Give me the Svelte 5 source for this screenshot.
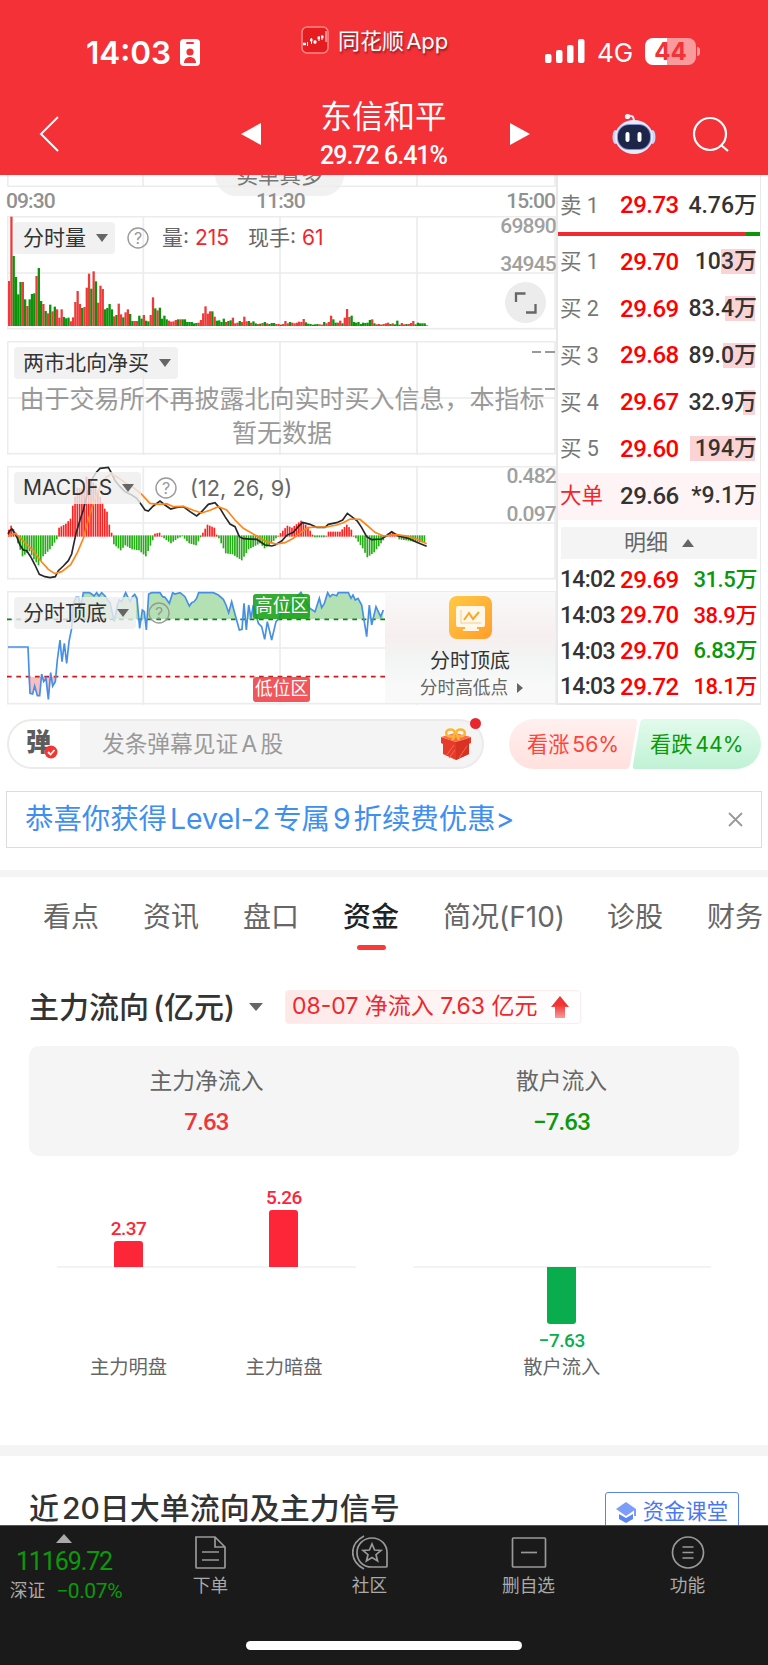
<script lang="ts">
    const sumBars = [
        { label: "主力明盘", value: 2.37, height: 26 },
        { label: "主力暗盘", value: 5.26, height: 57 },
    ];

    const bids = [
        { label: "买 1", price: "29.70", volume: "103万", depth: 34 },
        { label: "买 2", price: "29.69", volume: "83.4万", depth: 30 },
        { label: "买 3", price: "29.68", volume: "89.0万", depth: 32 },
        { label: "买 4", price: "29.67", volume: "32.9万", depth: 12 },
        { label: "买 5", price: "29.60", volume: "194万", depth: 65 },
    ];

    const trades = [
        { time: "14:02", price: "29.69", volume: "31.5万", up: false },
        { time: "14:03", price: "29.70", volume: "38.9万", up: true },
        { time: "14:03", price: "29.70", volume: "6.83万", up: false },
        { time: "14:03", price: "29.72", volume: "18.1万", up: true },
    ];

    const tabs = ["看点", "资讯", "盘口", "资金", "简况(F10)", "诊股", "财务"];
    const active = "资金";

    // one entry per minute, r = up, g = down
    const volume =
        "r135 r328 g210 g147 g95 g132 r132 g80 r60 g80 g96 g98 r150 g174 g75 r66 g45 r38 g64 r44 g58 r50 r25 r50 g27 g23 g25 r14 r26 r72 r105 r66 g54 r57 r115 r157 g112 r164 g134 r70 r121 r111 g50 g54 g66 g50 r29 g33 r67 r35 g26 r41 r50 g36 g15 r15 r15 g31 g22 r33 g16 g14 r33 r86 g53 r47 g55 g22 g31 g20 r16 r13 r14 r18 g20 r20 g20 g20 g12 g12 g12 g8 g9 r10 r18 r38 r59 r37 r44 g44 r28 g16 g17 g12 g22 r12 g15 g17 r25 r8 r10 g15 r12 r28 r14 g15 r10 g14 g8 r6 g7 r9 g12 r8 g6 g9 g9 r6 r6 g4 r6 r15 r8 g12 r10 r8 r10 r13 r12 r21 g11 g7 g6 g4 g5 g6 r5 r4 g12 r8 r12 r31 g20 g10 r10 r16 g8 r25 r51 r27 g31 g12 g10 g12 g6 g10 g9 g10 g18 r20 g8 r5 r6 g4 r6 r8 r10 g6 r8 g5 g16 g4 r9 r5 g6 r6 r9 r15 g5 g10 g8 g8 g8 r2"
            .split(" ")
            .map((d, i) => ({ x: 24 + i * 6.85, up: d[0] == "r", h: +d.slice(1) }));

    const macdKeys = [
        [0, 7], [1, 11], [3, 4], [4, -8], [6, -21], [9, -16], [11, -24], [13, -30], [15, -21], [18, -14], [21, -4],
        [22, 9], [25, 13], [27, 18], [28, 31], [30, 49], [32, 48], [34, 60], [36, 56], [38, 52], [40, 40], [42, 28],
        [43, 25], [44, 12], [45, 4], [46, -9], [49, -15], [51, -10], [54, -14], [57, -15], [60, -21], [63, -5],
        [64, 3], [66, 4], [67, 1], [68, -3], [71, -8], [74, -3], [76, -1], [79, -8], [82, -10], [84, -2], [85, 4],
        [87, 12], [90, 9], [91, 2], [92, -3], [95, -18], [98, -19], [102, -25], [105, -14], [110, -8], [112, -13],
        [115, -8], [117, -3], [118, 1], [122, 11], [124, 9], [128, 16], [131, 10], [133, 2], [134, -2], [138, -2],
        [139, 1], [140, 5], [145, 5], [148, 12], [150, 7], [151, 1], [152, -3], [155, -13], [157, -22], [160, -17],
        [163, -8], [165, -2], [166, 3], [168, 5], [170, 2], [171, -4], [174, -5], [179, -7], [183, -7],
    ];

    const macd: { x: number; v: number }[] = [];
    for (let k = 0; k < macdKeys.length - 1; k++) {
        const [a, va] = macdKeys[k];
        const [b, vb] = macdKeys[k + 1];
        for (let i = a; i < b; i++) {
            macd.push({ x: 24 + i * 6.85, v: (va + ((vb - va) * (i - a)) / (b - a)) * 3 });
        }
    }

    const dif =
        "24,612 30,602 36,597 48,615 60,645 70,660 80,662 92,680 105,705 118,733 135,740 150,743 166,740 175,722 190,708 205,692 215,672 228,610 240,570 250,540 262,490 275,450 288,428 300,415 325,412 335,430 345,452 360,470 375,485 395,495 410,505 420,518 435,540 445,543 460,528 480,513 495,525 512,537 530,532 550,530 570,545 590,558 605,545 625,523 645,518 660,535 675,560 690,582 705,590 718,620 730,626 770,628 795,645 815,648 825,645 845,633 860,616 880,607 895,590 908,577 930,583 950,592 975,592 985,583 1010,578 1028,570 1042,550 1055,560 1072,573 1085,593 1100,620 1115,629 1145,627 1155,620 1175,605 1195,618 1225,625 1250,637 1280,649";
    const dea =
        "24,618 45,610 60,622 80,643 100,662 120,690 145,718 165,731 185,725 212,704 232,668 250,625 262,580 275,535 290,493 305,462 320,440 335,433 350,440 375,458 400,472 425,493 450,520 480,523 500,521 520,530 550,529 580,541 605,549 630,541 655,530 680,540 705,570 730,595 770,618 800,635 830,642 855,638 880,625 905,605 925,593 950,591 980,591 1010,585 1030,578 1050,567 1080,568 1100,585 1125,607 1150,618 1190,614 1220,618 1250,627 1280,641";
    const signal =
        "24,201 84,201 90,340 98,342 104,318 112,347 119,347 125,282 131,305 138,295 145,358 152,278 158,318 166,305 172,240 180,180 186,245 193,190 200,250 207,185 215,145 220,70 228,52 236,52 243,80 250,38 268,38 275,42 282,48 290,38 297,48 305,38 315,48 323,60 330,68 343,125 352,75 358,60 365,65 377,38 390,65 397,50 404,43 411,55 419,145 427,90 433,95 439,150 446,42 455,38 480,38 488,50 495,52 508,70 518,38 525,42 540,38 555,50 568,78 575,68 582,65 590,55 596,38 640,38 655,45 670,58 678,75 686,98 695,65 703,95 718,150 726,148 732,70 739,150 746,75 753,115 760,75 775,130 785,140 794,178 802,125 815,180 828,125 838,115 850,80 865,95 885,55 903,37 910,50 930,85 945,95 958,55 965,83 973,70 983,38 990,50 998,43 1010,47 1015,38 1045,38 1053,55 1059,45 1066,60 1074,55 1085,75 1100,170 1108,75 1115,135 1128,80 1142,110 1150,90";
</script>

{#snippet grid(top: number)}
    <g stroke="#ececec" stroke-width="5" fill="none">
        <path d="M430 {top}v342M840 {top}v342M1251 {top}v342M21 {top + 171}h1647" />
        <rect x="23" y={top + 2} width="1642" height="336" />
    </g>
{/snippet}

{#snippet help()}
    <svg class="help" viewBox="0 0 22 22" width="22" height="22">
        <circle cx="11" cy="11" r="10" fill="none" stroke="#999" stroke-width="1.4" />
        <text x="11" y="16.5" text-anchor="middle">?</text>
    </svg>
{/snippet}

<div class="app">
    <header>
        <div class="status">
            <span class="clock">14:03</span>
            <svg class="idcard" width="20" height="27" viewBox="0 0 20 27">
                <rect width="20" height="27" rx="4" fill="#fff" />
                <rect x="6" y="3" width="8" height="2" rx="1" fill="#f33137" />
                <circle cx="10" cy="13" r="3.6" fill="#f33137" />
                <path d="M4 24c0-8 12-8 12 0z" fill="#f33137" />
            </svg>
            <svg class="logo" width="28" height="28" viewBox="0 0 28 28">
                <rect x="1" y="1" width="26" height="26" rx="5" fill="#e61d20" stroke="#f88" stroke-width="1.5" />
                <path d="M6.500 16v4M10.500 12v6M14 14v4M18 10v5M21 9v5M25 5v11" stroke="#fff" />
                <path d="M2 18h3M9 14h2.500M12.500 16h3M16.500 12h2.500M20 11h2.500" stroke="#fff" stroke-width="2.500" />
            </svg>
            <span class="brand">同花顺 App</span>
            <svg class="cell" width="40" height="24" viewBox="0 0 40 24" fill="#fff">
                <rect y="15" width="6.5" height="9" rx="2" />
                <rect x="11" y="11" width="6.5" height="13" rx="2" />
                <rect x="22" y="6" width="6.5" height="18" rx="2" />
                <rect x="33" width="6.5" height="24" rx="2" />
            </svg>
            <span class="net">4G</span>
            <span class="battery">44</span>
            <i class="nub"></i>
        </div>
        <div class="nav">
            <svg class="back" width="21" height="36" viewBox="0 0 21 36">
                <path d="M19 1 2 18l17 17" fill="none" stroke="#fff" stroke-width="2" />
            </svg>
            <svg class="prev" width="20" height="22"><path d="M20 0v22L0 11z" fill="#fff" /></svg>
            <div class="title">
                <b>东信和平</b>
                <span>29.72 6.41%</span>
            </div>
            <svg class="next" width="20" height="22"><path d="M0 0v22l20-11z" fill="#fff" /></svg>
            <svg class="robot" width="44" height="42" viewBox="0 0 44 42">
                <path d="M15 3c5-1 7 0 7 6" fill="none" stroke="#dfe5fa" stroke-width="2" />
                <circle cx="15.5" cy="3.5" r="2.6" fill="#f5f6ff" />
                <ellipse cx="3.5" cy="24" rx="3" ry="7" fill="#cdd3f5" />
                <ellipse cx="40.5" cy="24" rx="3" ry="7" fill="#cdd3f5" />
                <ellipse cx="22" cy="24" rx="19" ry="17" fill="#e6eafb" />
                <rect x="5" y="11" width="34" height="26" rx="12" fill="#8592d8" />
                <rect x="6" y="12" width="32" height="24" rx="11" fill="#1d2548" />
                <rect x="13.500" y="19" width="4" height="10" rx="2" fill="#fff" />
                <rect x="25.500" y="19" width="4" height="10" rx="2" fill="#fff" />
            </svg>
            <svg class="search" width="38" height="38" viewBox="0 0 38 38" fill="none" stroke="#fff" stroke-width="2.200">
                <circle cx="18" cy="18" r="16" />
                <path d="m29 29 7 6" />
            </svg>
        </div>
    </header>

    <main class="quote">
        <div class="charts">
            <div class="peek">
                <svg width="549" height="12" stroke="#ececec" stroke-width="1.6">
                    <path d="M.8 0v12M136 0v12M273 0v12M410 0v12M548 0v12M0 11.200h549" />
                </svg>
                <span class="bubble">卖单真多</span>
            </div>
            <div class="hours"><span>09:30</span><span>11:30</span><span>15:00</span></div>

            <section class="panel">
                <svg viewBox="21 138 1647 342" width="549" height="114">
                    {@render grid(138)}
                    {#each volume as bar}
                        <rect x={bar.x} y={468 - bar.h} width="6.9" height={bar.h} fill={bar.up ? "#ef3a3a" : "#0b930b"} />
                    {/each}
                </svg>
                <div class="tools">
                    <span class="chip">分时量<i class="down"></i></span>
                    {@render help()}
                    <span class="stat">量: <em>215</em></span>
                    <span class="stat">现手: <em>61</em></span>
                </div>
                <div class="scale"><span>69890</span><span>34945</span></div>
                <svg class="expand" width="41" height="41" viewBox="0 0 41 41">
                    <circle cx="20.500" cy="20.500" r="20.500" fill="#ececec" />
                    <path d="M11 20v-8.500h9.500M30.500 22v8.500h-9.500" fill="none" stroke="#666" stroke-width="2.300" />
                </svg>
            </section>

            <section class="panel">
                <svg viewBox="21 33 1647 342" width="549" height="114">{@render grid(33)}</svg>
                <div class="tools"><span class="chip">两市北向净买<i class="down"></i></span></div>
                <p class="notice">由于交易所不再披露北向实时买入信息，本指标<br />暂无数据</p>
                <svg class="dashes" width="24" height="44" stroke="#999" stroke-width="2">
                    <path d="M0 3h9M13 3h10M13 40h10" />
                </svg>
            </section>

            <section class="panel">
                <svg viewBox="21 408 1647 342" width="549" height="114">
                    {@render grid(408)}
                    {#each macd as bar}
                        <rect
                            x={bar.x}
                            y={bar.v > 0 ? 620 - bar.v : 616}
                            width="5"
                            height={Math.abs(bar.v)}
                            fill={bar.v > 0 ? "#ff2020" : "#25ad16"}
                        />
                    {/each}
                    <polyline points={dif} fill="none" stroke="#282828" stroke-width="5" />
                    <polyline points={dea} fill="none" stroke="#ff8519" stroke-width="5" />
                </svg>
                <div class="tools macd">
                    <span class="chip">MACDFS<i class="down"></i></span>
                    {@render help()}
                    <span class="stat">(12, 26, 9)</span>
                </div>
                <div class="scale"><span>0.482</span><span>0.097</span></div>
            </section>

            <section class="panel">
                <svg viewBox="21 33 1647 342" width="549" height="114">
                    {@render grid(33)}
                    <clipPath id="high"><rect x="21" y="33" width="1200" height="85" /></clipPath>
                    <clipPath id="low"><rect x="21" y="290" width="1200" height="85" /></clipPath>
                    <polygon points="24,118 {signal} 1150,118" fill="#1aa51a" opacity=".33" clip-path="url(#high)" />
                    <polygon points="84,290 {signal.slice(14)} 1150,290" fill="#f03a3a" opacity=".33" clip-path="url(#low)" />
                    <path d="M21 118h1134" stroke="#12801c" stroke-width="5" stroke-dasharray="14 14" />
                    <path d="M21 290h1134" stroke="#cc1919" stroke-width="5" stroke-dasharray="14 14" />
                    <polyline points={signal} fill="none" stroke="#468fe6" stroke-width="5" />
                </svg>
                <div class="tools">
                    <span class="chip">分时顶底<i class="down"></i></span>
                    {@render help()}
                </div>
                <span class="zone high">高位区</span>
                <span class="zone low">低位区</span>
                <div class="promo">
                    <svg width="43" height="43" viewBox="0 0 43 43">
                        <defs>
                            <linearGradient id="gold" x2="1" y2="1">
                                <stop stop-color="#ffca45" />
                                <stop offset="1" stop-color="#ff9d2c" />
                            </linearGradient>
                        </defs>
                        <rect width="43" height="43" rx="8" fill="url(#gold)" />
                        <path d="M9 10h25q2 0 2 2v17q0 2-2 2h-6v2h2v2H14v-2h2v-2H9q-2 0-2-2V12q0-2 2-2z" fill="#fff8e8" />
                        <path d="M12 14v13h20" fill="none" stroke="#f5dcae" stroke-width="1.500" />
                        <path d="m15 24 5-7 4 6 6-7" fill="none" stroke="#fca52b" stroke-width="2" />
                    </svg>
                    <b>分时顶底</b>
                    <span>分时高低点<i class="go"></i></span>
                </div>
            </section>
        </div>

        <aside class="book">
            <div class="order ask"><span>卖 1</span><b>29.73</b><em>4.76万</em></div>
            <div class="ratio"></div>
            {#each bids as bid}
                <div class="order">
                    <span>{bid.label}</span><b>{bid.price}</b>
                    <em><i class="depth" style="width: {bid.depth}px"></i>{bid.volume}</em>
                </div>
            {/each}
            <div class="order big"><span>大单</span><b>29.66</b><em>*9.1万</em></div>
            <div class="more">明细<i class="up"></i></div>
            {#each trades as t}
                <div class="order trade">
                    <span>{t.time}</span><b>{t.price}</b><em class={t.up ? "rise" : "fall"}>{t.volume}</em>
                </div>
            {/each}
        </aside>
    </main>

    <div class="chat">
        <div class="input">
            <div class="dan">
                弹
                <svg width="14" height="14" viewBox="0 0 14 14">
                    <circle cx="7" cy="7" r="6.500" fill="#f5352f" />
                    <path d="m4 7 2.500 2.500L10.500 5" fill="none" stroke="#fff" stroke-width="1.800" />
                </svg>
            </div>
            <span class="hint">发条弹幕见证 A 股</span>
            <svg class="gift" width="30" height="32" viewBox="0 0 30 32">
                <path d="M0 9 15 14 30 9v6l-2 1v10l-13 6-13-6V16l-2-1z" fill="#e63b2a" />
                <path d="M0 9 14 5l16 4-15 5z" fill="#ff6b4a" />
                <path d="M15 14v18l13-6V11z" fill="#d83222" />
                <path d="m5 28 8-11M8 30l6-8M18 30l8-12" stroke="#f4694e" />
                <g fill="none" stroke="#f7b733" stroke-width="2.600">
                    <ellipse cx="9.500" cy="5" rx="4.300" ry="3.500" />
                    <ellipse cx="19.500" cy="5" rx="4.300" ry="3.500" />
                    <path d="m14 8-3 4M16 8l2 4" />
                </g>
            </svg>
            <i class="dot"></i>
        </div>
        <div class="votes">
            <svg viewBox="0 0 252 50" width="252" height="50">
                <defs>
                    <linearGradient id="bull" x2="0" y2="1">
                        <stop stop-color="#fff0ef" />
                        <stop offset="1" stop-color="#ffe1df" />
                    </linearGradient>
                    <linearGradient id="bear" x2="0" y2="1">
                        <stop stop-color="#e2faec" />
                        <stop offset="1" stop-color="#c0f2d5" />
                    </linearGradient>
                </defs>
                <path d="M25 0H125q4 0 3 4L121 46q-1 4-5 4H25a25 25 0 0 1 0-50z" fill="url(#bull)" />
                <path d="M227 0H136q-4 0-5 4L124 46q-1 4 3 4h100a25 25 0 0 0 0-50z" fill="url(#bear)" />
            </svg>
            <div><span class="bull">看涨 56%</span><span class="bear">看跌 44%</span></div>
        </div>
    </div>

    <div class="offer">
        <a href="#level2">恭喜你获得 Level-2 专属 9 折续费优惠&gt;</a>
        <svg width="15" height="15" stroke="#999" stroke-width="1.800"><path d="m1 1 13 13M14 1 1 14" /></svg>
    </div>

    <nav class="tabs">
        {#each tabs as tab}
            <span class:active={tab == active}>{tab}</span>
        {/each}
    </nav>

    <section class="flow">
        <div class="head">
            <h2>主力流向 (亿元)</h2>
            <i class="down"></i>
            <span class="tag">
                08-07 净流入 7.63 亿元
                <svg width="18" height="22" viewBox="0 0 18 22">
                    <defs>
                        <linearGradient id="arrow" x2="0" y2="1">
                            <stop offset=".4" stop-color="#f03434" />
                            <stop offset="1" stop-color="#f99a9a" />
                        </linearGradient>
                    </defs>
                    <path d="m9 0 9 11h-4v11H4V11H0z" fill="url(#arrow)" />
                </svg>
            </span>
        </div>
        <div class="card">
            <div><span>主力净流入</span><b class="in">7.63</b></div>
            <div><span>散户流入</span><b class="out">−7.63</b></div>
        </div>
        <div class="bars">
            <div class="axis">
                {#each sumBars as bar}
                    <div class="col">
                        <div class="pos">
                            <b>{bar.value}</b>
                            <i style="height: {bar.height}px"></i>
                        </div>
                        <div class="neg"></div>
                        <span>{bar.label}</span>
                    </div>
                {/each}
            </div>
            <div class="axis">
                <div class="col">
                    <div class="pos"></div>
                    <div class="neg">
                        <i style="height: 57px"></i>
                        <b>−7.63</b>
                    </div>
                    <span>散户流入</span>
                </div>
            </div>
        </div>
    </section>

    <section class="recent">
        <h2>近 20日大单流向及主力信号</h2>
        <span class="course">
            <svg width="20" height="27" viewBox="0 0 20 27" fill="#5b86f7">
                <path d="M10 4 0 11l10 7 8-5.500V18h2v-7z" opacity=".8" />
                <path d="M3 16v5l7 4 7-4v-5l-7 4z" />
            </svg>
            资金课堂
        </span>
    </section>

    <footer>
        <div class="menu">
            <div class="index">
                <i class="up"></i>
                <b>11169.72</b>
                <div><span>深证</span><em>−0.07%</em></div>
            </div>
            <div class="item">
                <svg width="36" height="36" viewBox="0 0 36 36">
                    <path d="M4 3h18l10 10v20q0 1-1 1H4q-1 0-1-1V3zM22 3v10h10M9 18h17M9 26h17" />
                </svg>
                下单
            </div>
            <div class="item">
                <svg width="36" height="36" viewBox="0 0 36 36">
                    <path d="M20 33C10 33 5 26 5 18.500S11 4 20 4s15 7 15 14.500V32q0 1-1 1zM12 2C-3 10-3 27 12 35" />
                    <path d="m20 10 2.600 6 6.400.5-5 4.200 1.600 6.300-5.600-3.400-5.600 3.400 1.600-6.300-5-4.200 6.400-.5z" />
                </svg>
                社区
            </div>
            <div class="item">
                <svg width="36" height="36" viewBox="0 0 36 36">
                    <rect x="1.500" y="4" width="33" height="29" rx="1" /><path d="M10 18.500h16" />
                </svg>
                删自选
            </div>
            <div class="item">
                <svg width="36" height="36" viewBox="0 0 36 36">
                    <circle cx="18" cy="18.500" r="15.500" /><path d="M12.500 13h11M12.500 18.500h11M12.500 24h11" />
                </svg>
                功能
            </div>
        </div>
        <div class="home"></div>
    </footer>
</div>

<style>
    :global(body) {
        background: #fff;
    }

    .app {
        display: flex;
        flex-direction: column;
        width: 768px;
        height: 1665px;
        overflow: hidden;
        font-family: Inter, "Noto Sans CJK SC", sans-serif;
        line-height: 1.3;
        color: #333;
    }

    .app * {
        box-sizing: border-box;
    }

    svg {
        flex: none;
        display: block;
    }

    em,
    i {
        font-style: normal;
    }

    b {
        font-weight: 500;
    }

    h2 {
        margin: 0;
        font-size: 30px;
        font-weight: 500;
        line-height: 40px;
        white-space: nowrap;
    }

    header {
        flex: none;
        height: 175px;
        background: #f33137;
        color: #fff;
        z-index: 1;
    }

    .status {
        display: flex;
        height: 92px;
        white-space: nowrap;
    }

    .clock {
        width: 94px;
        margin: 33px 0 0 86px;
        font-size: 31.500px;
        font-weight: 600;
        line-height: 40px;
    }

    .idcard {
        margin-top: 39px;
    }

    .logo {
        margin: 26px 0 0 101px;
    }

    .brand {
        width: 112px;
        margin: 26px 0 0 9px;
        font-size: 22px;
        line-height: 30px;
        word-spacing: -4px;
        text-shadow: 1px 2px 2px #0006;
    }

    .cell {
        margin: 39px 0 0 95px;
    }

    .net {
        width: 48px;
        margin: 38px 0 0 12px;
        font-size: 26px;
        line-height: 30px;
    }

    .battery {
        width: 51px;
        height: 27px;
        margin-top: 38px;
        border-radius: 8px;
        background: linear-gradient(90deg, #fff 44%, #f99a9d 44%);
        color: #f33137;
        font-size: 24px;
        font-weight: 700;
        line-height: 27px;
        text-align: center;
    }

    .nub {
        width: 3px;
        height: 9px;
        margin: 47px 0 0 1px;
        border-radius: 0 4px 4px 0;
        background: #f99a9d;
    }

    .nav {
        display: flex;
    }

    .back {
        margin: 24px 0 0 39px;
    }

    .prev {
        margin: 31px 0 0 181px;
    }

    .title {
        display: flex;
        flex-direction: column;
        align-items: center;
        width: 249px;
        padding: 2px 4px 0 0;
    }

    .title b {
        font-size: 31.5px;
        font-weight: 400;
        line-height: 46px;
    }

    .title span {
        font: 500 25px/32px Roboto, sans-serif;
        letter-spacing: -1px;
    }

    .next {
        margin-top: 31px;
    }

    .robot {
        margin: 21px 0 0 82px;
    }

    .search {
        margin: 24px 0 0 36px;
    }

    .quote {
        display: flex;
        flex: none;
        height: 530px;
        padding-left: 7px;
    }

    .charts {
        width: 549px;
    }

    .peek {
        position: relative;
        height: 12px;
    }

    .bubble {
        position: absolute;
        bottom: -9px;
        left: 208px;
        width: 129px;
        height: 42px;
        border-radius: 21px;
        background: #eeeeeecc;
        color: #777;
        font-size: 21.500px;
        line-height: 42px;
        text-align: center;
    }

    .hours {
        display: flex;
        justify-content: space-between;
        height: 29px;
        position: relative;
        left: -1px;
        color: #919191;
        font: 500 21px/29px Roboto, sans-serif;
        letter-spacing: -.9px;
    }

    .panel {
        display: grid;
        grid-template-columns: 549px;
        grid-template-rows: 114px;
        height: 114px;
        margin-bottom: 11px;
    }

    .panel > * {
        grid-area: 1 / 1;
    }

    .tools {
        display: flex;
        align-items: center;
        height: 32px;
        margin: 6px 0 0 7px;
    }

    .chip {
        display: flex;
        align-items: center;
        height: 32px;
        padding: 0 7px 0 9px;
        border-radius: 4px;
        background: #eeeeeecc;
        font-size: 21px;
    }

    .down,
    .up {
        border: 6px solid transparent;
    }

    .down {
        margin-left: 10px;
        border-top: 8px solid #666;
        border-bottom: 0;
    }

    .up {
        border-bottom: 8px solid #666;
        border-top: 0;
    }

    .help {
        margin: 0 13px 0 12px;
    }

    .help text {
        fill: #999;
        font-size: 16px;
    }

    .stat {
        margin-right: 19px;
        color: #666;
        font-size: 21px;
    }

    .stat em {
        color: #f0262c;
    }

    .macd .help {
        margin-left: 14px;
    }

    .macd .stat {
        font-size: 21.700px;
    }

    .scale {
        justify-self: end;
        display: flex;
        flex-direction: column;
        gap: 13px;
        height: 62px;
        margin-top: -2px;
        color: #a0a0a0;
        font: 500 21px/25px Roboto, sans-serif;
        letter-spacing: -.8px;
    }

    .expand {
        justify-self: end;
        margin: 66px 10px 0 0;
    }

    .notice {
        margin: 41px 0 0 12px;
        color: #999;
        font-size: 25px;
        line-height: 34px;
        text-align: center;
        width: 526px;
        white-space: nowrap;
    }

    .dashes {
        justify-self: end;
        margin-top: 8px;
    }

    .zone {
        justify-self: start;
        height: 25px;
        margin-left: 246px;
        padding: 0 2px;
        border-radius: 3px;
        color: #fff;
        font-size: 17.7px;
        line-height: 24px;
    }

    .zone.high {
        margin-top: 3px;
        background: #18a018e0;
    }

    .zone.low {
        margin-top: 86px;
        background: #ee3f45e0;
    }

    .promo {
        justify-self: end;
        display: flex;
        flex-direction: column;
        align-items: center;
        width: 170px;
        height: 111px;
        margin: 1px 1px 0 0;
        padding: 4px 0 0;
        background: linear-gradient(#f9f9f9, #f7efef 40%, #f1f5f3 60%, #f9f9f9 85%);
    }

    .promo b {
        margin-top: 7px;
        font-size: 20px;
        font-weight: 400;
        line-height: 30px;
    }

    .promo span {
        display: flex;
        align-items: center;
        padding-left: 3px;
        color: #666;
        font-size: 17.7px;
        line-height: 24px;
    }

    .go {
        margin-left: 9px;
        border: 5px solid transparent;
        border-left: 6px solid #666;
        border-right: 0;
    }

    .book {
        width: 205px;
        border: solid #e8e8e8;
        border-width: 0 1px 2px 2px;
    }

    .order {
        display: flex;
        align-items: center;
        height: 46.75px;
        padding: 0 3px 0 2px;
        font-family: Roboto, "Noto Sans CJK SC", sans-serif;
        white-space: nowrap;
    }

    .order span {
        width: 60px;
        color: #777;
        font-size: 21.500px;
    }

    .order b {
        color: #f00;
        font-size: 24px;
        letter-spacing: -.5px;
    }

    .order em {
        position: relative;
        margin-left: auto;
        font-size: 23px;
        font-weight: 500;
        z-index: 0;
    }

    .depth {
        position: absolute;
        top: 50%;
        right: 2px;
        height: 25px;
        margin-top: -13px;
        background: #fbd3d5;
        z-index: -1;
    }

    .ask {
        height: 57px;
        padding-top: 4px;
    }

    .ratio {
        height: 4px;
        margin-bottom: 3px;
        background: linear-gradient(90deg, #f02a30 93%, #0a970a 93%);
    }

    .big {
        background: #fff4f5;
    }

    .big span {
        color: #f0262c;
    }

    .big b {
        color: #333;
    }

    .more {
        display: flex;
        align-items: center;
        justify-content: center;
        height: 32px;
        margin: 7px 3px 4px;
        background: #f4f4f4;
        color: #666;
        font-size: 22px;
    }

    .more .up {
        margin-left: 14px;
    }

    .trade {
        height: 35.7px;
    }

    .trade span {
        color: #333;
        font-size: 23px;
        font-weight: 500;
        letter-spacing: -.7px;
    }

    .trade em {
        font-size: 22px;
        letter-spacing: -.4px;
    }

    .rise {
        color: #f00;
    }

    .fall {
        color: #0a970a;
    }

    .chat {
        display: flex;
        flex: none;
        height: 50px;
        margin: 14px 7px 0;
    }

    .input {
        position: relative;
        display: flex;
        align-items: center;
        width: 477px;
        border: 2px solid #ebebeb;
        border-radius: 25px;
        background: #f4f4f4;
    }

    .dan {
        position: relative;
        width: 71px;
        height: 46px;
        padding-left: 17px;
        border-radius: 23px 0 0 23px;
        background: #fff;
        color: #5c5c5c;
        font-size: 25px;
        font-weight: 800;
        line-height: 43px;
    }

    .dan svg {
        position: absolute;
        top: 24px;
        left: 35px;
    }

    .hint {
        width: 338px;
        padding-left: 22px;
        color: #999;
        font-size: 22.700px;
        word-spacing: -3px;
    }

    .gift {
        margin-left: 23px;
    }

    .dot {
        position: absolute;
        top: -3px;
        right: 1px;
        width: 11px;
        height: 11px;
        border-radius: 50%;
        background: #e8272d;
    }

    .votes {
        display: grid;
        width: 252px;
        margin-left: auto;
    }

    .votes > * {
        grid-area: 1 / 1;
    }

    .votes div {
        display: flex;
        font-size: 21.200px;
        line-height: 51px;
        word-spacing: -3px;
        white-space: nowrap;
    }

    .bull {
        width: 123px;
        padding-left: 18px;
        color: #ff4438;
    }

    .bear {
        padding-left: 18px;
        color: #0a9a0a;
    }

    .offer {
        display: flex;
        flex: none;
        align-items: center;
        justify-content: space-between;
        height: 57px;
        margin: 22px 6px;
        padding: 0 18px;
        border: 1px solid #dcdcdc;
    }

    .offer a {
        color: #3e8ff0;
        font-size: 28.400px;
        text-decoration: none;
        white-space: nowrap;
        word-spacing: -5px;
    }

    .tabs {
        display: flex;
        flex: none;
        gap: 44px;
        height: 89px;
        padding-left: 43px;
        border-top: 7px solid #f4f4f4;
        color: #666;
        font-size: 28px;
        line-height: 80px;
        white-space: nowrap;
    }

    .tabs span:nth-child(5) {
        margin-right: -2px;
    }

    .active {
        display: flex;
        flex-direction: column;
        align-items: center;
        color: #222;
        font-weight: 500;
    }

    .active::after {
        content: "";
        width: 29px;
        height: 5px;
        margin-top: -12px;
        border-radius: 3px;
        background: #fc3a35;
    }

    .flow {
        flex: none;
        height: 486px;
        padding: 28px 29px 0;
    }

    .head {
        display: flex;
        align-items: center;
        height: 40px;
    }

    .head h2 {
        width: 207px;
        word-spacing: -4px;
    }

    .head .down {
        margin: 0 22px 0 13px;
        border-width: 8px 7px 0;
    }

    .tag {
        display: flex;
        align-items: center;
        justify-content: space-between;
        width: 296px;
        height: 34px;
        padding: 0 11px 0 6px;
        border: 1px solid #fdecec;
        border-radius: 4px;
        background: linear-gradient(90deg, #fde8e8, #fff);
        color: #f0262c;
        font-size: 23px;
        white-space: nowrap;
    }

    .card {
        display: flex;
        height: 110px;
        margin-top: 19px;
        border-radius: 10px;
        background: #f5f5f5;
    }

    .card div {
        flex: 1;
        display: flex;
        flex-direction: column;
        align-items: center;
        padding-top: 18px;
        color: #666;
        font-size: 22.800px;
        line-height: 34px;
    }

    .card b {
        margin-top: 7px;
        font-family: Roboto, sans-serif;
        font-size: 24px;
        letter-spacing: -.8px;
    }

    .card .in {
        color: #f0343a;
    }

    .card .out {
        color: #0a9a0a;
    }

    .bars {
        display: flex;
        gap: 57px;
        padding: 0 28px;
    }

    .axis {
        flex: 1;
        display: flex;
        justify-content: space-between;
        padding: 0 33px;
        background: linear-gradient(#f3f3f3, #f3f3f3) 0 110px / 100% 2px no-repeat;
    }

    .col {
        display: flex;
        flex-direction: column;
        align-items: center;
        color: #666;
        font-size: 19.300px;
    }

    .col:only-child {
        margin: 0 auto;
    }

    .pos,
    .neg {
        display: flex;
        flex-direction: column;
        align-items: center;
        height: 111px;
    }

    .pos {
        justify-content: flex-end;
        color: #fd2639;
    }

    .neg {
        height: 88px;
        color: #0aad4d;
    }

    .col i {
        width: 29px;
        border-radius: 3px 3px 0 0;
        background: #fd2639;
    }

    .neg i {
        border-radius: 0 0 3px 3px;
        background: #0aad4d;
    }

    .col b {
        font: 500 19px/25px Roboto, sans-serif;
        letter-spacing: -.5px;
    }

    .neg b {
        margin-top: 4px;
    }

    .recent {
        display: flex;
        flex: none;
        justify-content: space-between;
        height: 80px;
        padding: 32px 29px 0;
        border-top: 11px solid #f4f4f4;
        overflow: hidden;
    }

    .recent h2 {
        word-spacing: -5px;
    }

    .course {
        display: flex;
        align-items: center;
        justify-content: space-between;
        width: 134px;
        height: 38px;
        margin-top: 4px;
        padding: 0 10px;
        border: 1px solid #5a82f5;
        border-radius: 3px;
        color: #4a78f5;
        font-size: 21.300px;
        line-height: 30px;
    }

    footer {
        flex: none;
        height: 141px;
        border-top: 1px solid #555;
        background: #1a1a1a;
        color: #aaa;
        font-size: 17.700px;
    }

    .menu {
        display: flex;
        height: 115px;
    }

    .index {
        display: flex;
        flex-direction: column;
        align-items: center;
        width: 131px;
        padding: 8px 3px 0 0;
        font-family: Roboto, "Noto Sans CJK SC", sans-serif;
    }

    .index .up {
        border-width: 0 8px 9px;
        border-bottom-color: #aaa;
    }

    .index b {
        margin-top: 2px;
        color: #0a9a0a;
        font-size: 25px;
        font-weight: 400;
        line-height: 34px;
        letter-spacing: -1.1px;
    }

    .index div {
        display: flex;
        gap: 11px;
        padding-left: 4px;
        line-height: 24px;
    }

    .index em {
        color: #0a9a0a;
        font-size: 21px;
        letter-spacing: -.4px;
    }

    .item {
        display: flex;
        flex-direction: column;
        align-items: center;
        gap: 3px;
        width: 159px;
        padding-top: 8px;
        line-height: 26px;
    }

    .item svg {
        fill: none;
        stroke: #999;
        stroke-width: 1.7;
    }

    .home {
        width: 276px;
        height: 9px;
        margin: 0 auto;
        border-radius: 5px;
        background: #fff;
    }
</style>
